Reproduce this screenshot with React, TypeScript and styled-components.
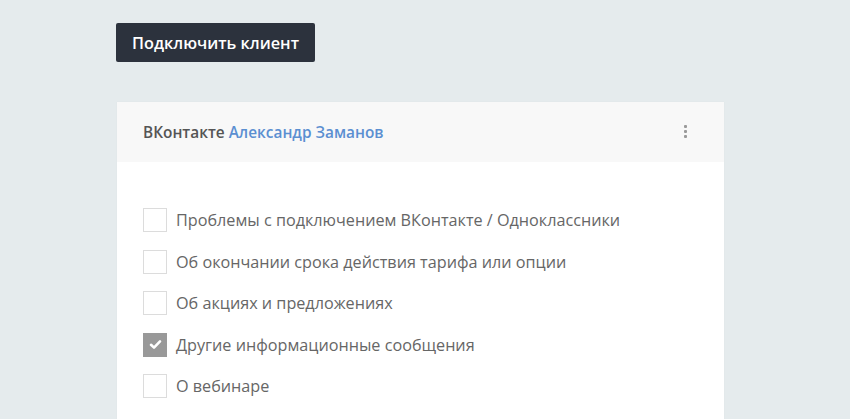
import React from "react";
import styled, { createGlobalStyle } from "styled-components";

const Global = createGlobalStyle`
  html, body { margin: 0; padding: 0; }
  body {
    background: #e5ebed;
    font-family: "Open Sans", "Liberation Sans", sans-serif;
    width: 850px;
    height: 419px;
    overflow: hidden;
  }
`;

const Page = styled.div`
  padding: 23px 0 0 116px;
  display: flex;
  flex-direction: column;
  align-items: flex-start;
`;

const ConnectButton = styled.button`
  height: 39px;
  width: 199px;
  padding: 0;
  background: #2c323d;
  color: #fff;
  border: none;
  border-radius: 2px;
  font-family: "Open Sans", sans-serif;
  font-size: 16.25px;
  font-weight: 600;
  cursor: pointer;
`;

const Card = styled.section`
  margin-top: 40px;
  margin-left: 1px;
  width: 607px;
  background: #fff;
  box-shadow: 0 0 1px rgba(0, 0, 0, 0.06);
`;

const CardHeader = styled.header`
  height: 60px;
  background: #f8f8f8;
  display: flex;
  align-items: center;
  justify-content: space-between;
  padding: 0 37px 0 26px;
  box-sizing: border-box;
`;

const Title = styled.div`
  font-size: 15.4px;
  font-weight: 600;
  color: #555;
`;

const Name = styled.span`
  color: #5b8fd1;
`;

const Kebab = styled.button`
  display: flex;
  flex-direction: column;
  gap: 2px;
  padding: 0;
  border: none;
  background: none;
  margin-top: -2px;
  span {
    width: 3px;
    height: 3px;
    background: #9a9a9a;
    border-radius: 1px;
  }
`;

const CardBody = styled.div`
  padding: 46px 26px 30px;
  display: flex;
  flex-direction: column;
  gap: 17.5px;
`;

const Row = styled.label`
  display: flex;
  align-items: center;
  gap: 9px;
  height: 24px;
  cursor: pointer;
`;

const Box = styled.span<{ $checked: boolean }>`
  width: 24px;
  height: 24px;
  box-sizing: border-box;
  border: 1px solid ${(p) => (p.$checked ? "#999" : "#dcdcdc")};
  background: ${(p) => (p.$checked ? "#999" : "#fff")};
  display: flex;
  align-items: center;
  justify-content: center;
`;

const Label = styled.span`
  font-size: 16.2px;
  color: #666;
  line-height: 24px;
`;

const items = [
  { text: "Проблемы с подключением ВКонтакте / Одноклассники", checked: false },
  { text: "Об окончании срока действия тарифа или опции", checked: false },
  { text: "Об акциях и предложениях", checked: false },
  { text: "Другие информационные сообщения", checked: true },
  { text: "О вебинаре", checked: false },
];

export default function App() {
  return (
    <>
      <Global />
      <Page>
        <ConnectButton>Подключить клиент</ConnectButton>
        <Card>
          <CardHeader>
            <Title>
              ВКонтакте <Name>Александр Заманов</Name>
            </Title>
            <Kebab aria-label="menu">
              <span />
              <span />
              <span />
            </Kebab>
          </CardHeader>
          <CardBody>
            {items.map((it) => (
              <Row key={it.text}>
                <Box $checked={it.checked}>
                  {it.checked && (
                    <svg width="13" height="11" viewBox="0 0 13 11">
                      <path d="M2 5.8 L5 8.6 L11 2.4" fill="none" stroke="#fff" strokeWidth="2.6" strokeLinecap="round" strokeLinejoin="round" />
                    </svg>
                  )}
                </Box>
                <Label>{it.text}</Label>
              </Row>
            ))}
          </CardBody>
        </Card>
      </Page>
    </>
  );
}
